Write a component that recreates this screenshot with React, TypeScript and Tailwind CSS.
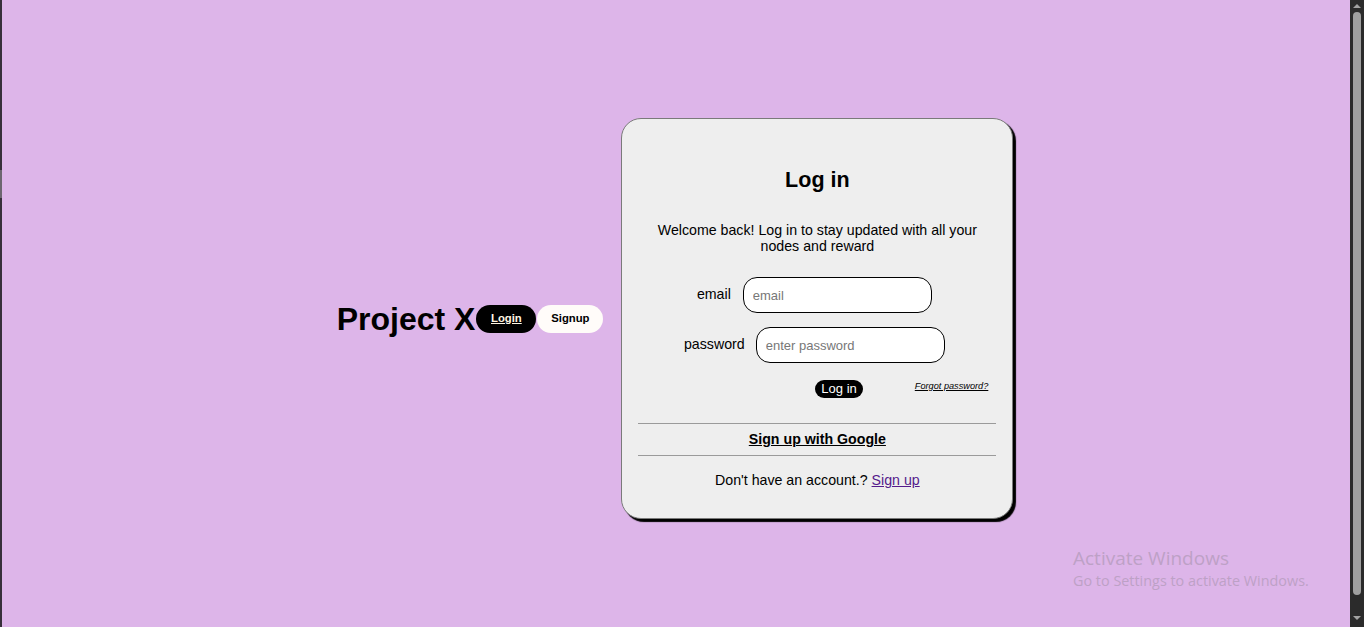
export default function App() {
  return (
    <div className="relative flex h-[627px] w-[1364px] overflow-hidden bg-[#ddb5e9] font-['Liberation_Sans',Arial,sans-serif]">
      {/* left window edge */}
      <div className="flex w-[2px] flex-col bg-[#372f3b]">
        <div className="h-[170px]" />
        <div className="h-[28px] bg-[#6c6670]" />
      </div>

      <main className="flex flex-1 items-center justify-center pt-[10px] pr-[2px]">
        <div className="flex items-center">
          <h1 className="text-[32px] font-bold leading-none text-black">Project X</h1>
          <button className="ml-[1px] h-[28px] w-[60px] rounded-full bg-black text-[11.3px] font-bold text-[#fff6e4] underline">
            Login
          </button>
          <button className="ml-[1px] h-[28px] w-[66px] rounded-full bg-[#fffcf9] text-[11.3px] font-bold text-black">
            Signup
          </button>
        </div>

        <div className="ml-[18px] flex h-[401px] w-[392px] flex-col rounded-[20px] border border-[#7a7a7a] bg-[#eeeeee] px-[16px] pt-[48px] shadow-[3px_3px_1px_#000]">
          <h2 className="text-center text-[21.5px] font-bold leading-[26px] text-black">Log in</h2>
          <p className="mx-auto mt-[29px] w-[340px] text-center text-[14.2px] leading-[16px] text-black">
            Welcome back! Log in to stay updated with all your nodes and reward
          </p>

          <div className="mt-[23px] flex items-center justify-center pr-[6px]">
            <label className="text-[14.2px] text-black">email</label>
            <input
              placeholder="email"
              className="ml-[12px] h-[36px] w-[189px] rounded-[14px] border border-black bg-white pl-[9px] text-[13px] outline-none placeholder:text-[#777]"
            />
          </div>
          <div className="mt-[14px] flex items-center justify-center pr-[6px]">
            <label className="text-[14.2px] text-black">password</label>
            <input
              placeholder="enter password"
              className="ml-[11px] h-[36px] w-[189px] rounded-[14px] border border-black bg-white pl-[9px] text-[13px] outline-none placeholder:text-[#777]"
            />
          </div>

          <div className="mt-[17px] flex items-start">
            <button className="ml-[177px] h-[18px] rounded-full bg-black px-[6px] text-[13px] leading-[18px] text-white">
              Log in
            </button>
            <a href="#" className="ml-[52px] text-[9.2px] italic leading-[12px] text-black underline">
              Forgot password?
            </a>
          </div>

          <div className="mt-[25px] border-t border-[#9a9a9a]" />
          <a href="#" className="flex h-[31px] items-center justify-center pt-[1px] text-[14.2px] font-bold text-black underline">
            Sign up with Google
          </a>
          <div className="border-t border-[#9a9a9a]" />

          <p className="mt-[16px] text-center text-[14.2px] leading-[16px] text-black">
            Don't have an account.?{" "}
            <a href="#" className="text-[#551a8b] underline">
              Sign up
            </a>
          </p>
        </div>
      </main>

      {/* scrollbar */}
      <div className="flex w-[14px] flex-col items-center bg-[#2b2b2b]">
        <svg width="10" height="8" viewBox="0 0 10 8" className="mt-[2px]">
          <path d="M1 6 L5 2 L9 6 Z" fill="#a3a3a3" />
        </svg>
        <div className="mt-[2px] h-[583px] w-[8px] rounded-full bg-[#a0a0a0]" />
        <div className="flex-1" />
        <svg width="10" height="8" viewBox="0 0 10 8" className="mb-[5px]">
          <path d="M1 2 L5 6 L9 2 Z" fill="#a3a3a3" />
        </svg>
      </div>

      {/* activation watermark */}
      <div className="absolute left-[1073px] top-[547px] font-['Open_Sans',sans-serif] text-[#bda1c6]">
        <div className="text-[19px] leading-[23px]">Activate Windows</div>
        <div className="text-[14.4px] leading-[22px]">Go to Settings to activate Windows.</div>
      </div>
    </div>
  );
}
